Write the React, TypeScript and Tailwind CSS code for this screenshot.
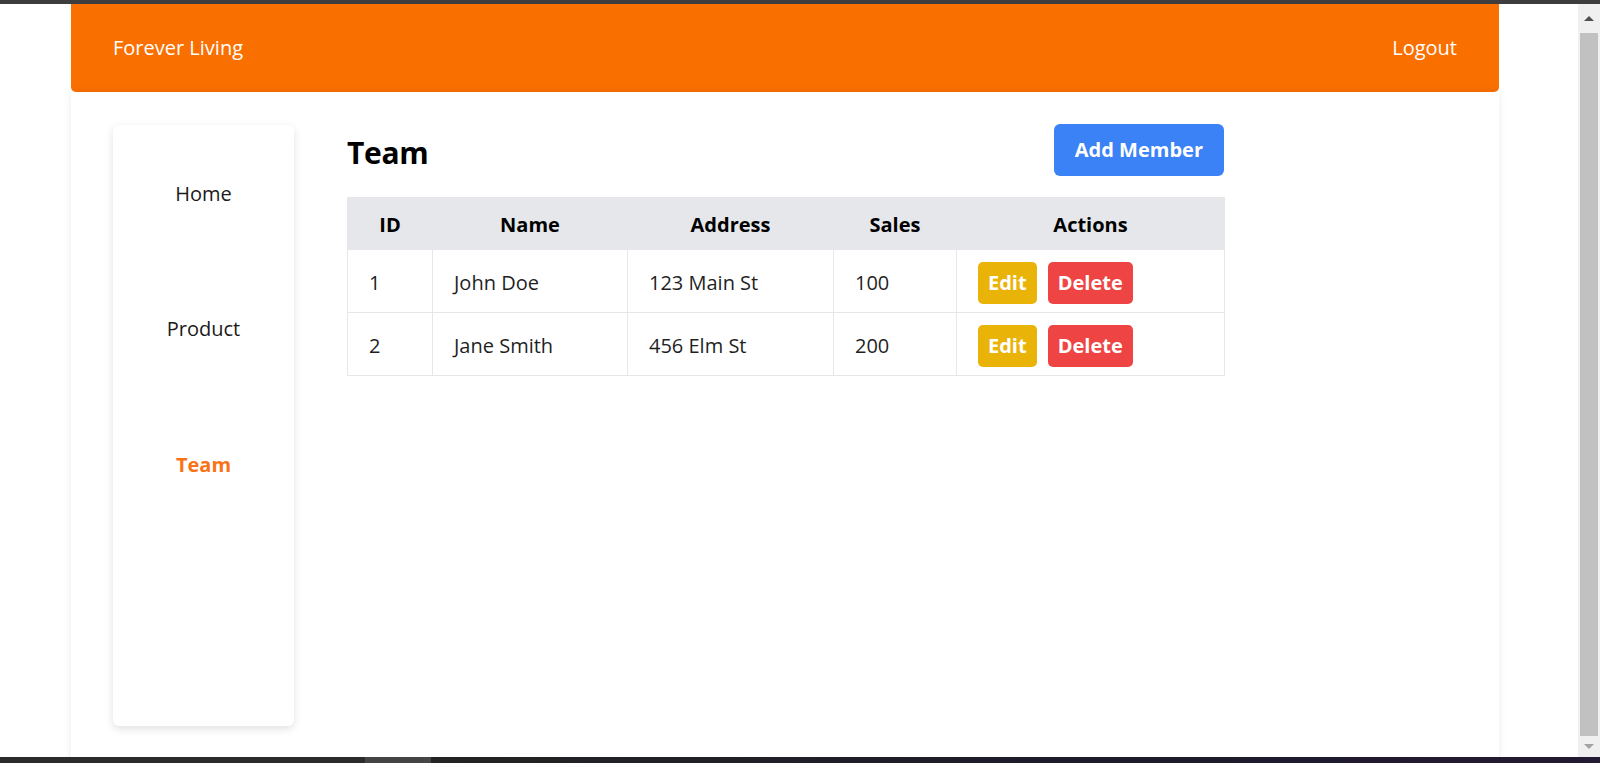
import React from 'react'

interface Member {
  id: number
  name: string
  address: string
  sales: number
}

const members: Member[] = [
  { id: 1, name: 'John Doe', address: '123 Main St', sales: 100 },
  { id: 2, name: 'Jane Smith', address: '456 Elm St', sales: 200 },
]

const navItems = [
  { label: 'Home', active: false },
  { label: 'Product', active: false },
  { label: 'Team', active: true },
]

const Scrollbar: React.FC = () => (
  <div className="flex w-[22px] flex-col bg-[#f0f0f0]">
    <div className="flex h-[29px] items-center justify-center">
      <div className="h-0 w-0 border-x-[5px] border-b-[5px] border-x-transparent border-b-[#505050]" />
    </div>
    <div className="mx-[2px] flex-1 bg-[#c1c1c1]" />
    <div className="flex h-[21px] items-center justify-center">
      <div className="h-0 w-0 border-x-[5px] border-t-[5px] border-x-transparent border-t-[#a3a3a3]" />
    </div>
  </div>
)

export default function App() {
  return (
    <div className="flex h-[763px] w-[1600px] flex-col overflow-hidden bg-white font-['Open_Sans',sans-serif]">
      {/* browser chrome edge */}
      <div className="h-[4px] bg-[#3d3d3d]" />

      <div className="flex h-[753px]">
        <div className="flex-1 overflow-hidden bg-white">
          {/* Navbar */}
          <header className="ml-[71px] flex h-[88px] w-[1428px] items-center justify-between rounded-b-[5px] bg-[#f96f00] px-[42px] text-[20px] text-white">
            <span>Forever Living</span>
            <button>Logout</button>
          </header>

          {/* Page card */}
          <main className="ml-[71px] flex w-[1428px] gap-[53px] bg-white pb-[40px] pl-[42px] pt-[32px] shadow-[0_0_8px_rgba(0,0,0,0.08)]">
            {/* Sidebar */}
            <aside className="mt-[1px] flex h-[601px] w-[181px] shrink-0 flex-col items-center gap-[105px] rounded-md bg-white pt-[54px] text-[20px] leading-[30px] shadow-[0_3px_8px_rgba(0,0,0,0.12)]">
              {navItems.map((item) => (
                <a
                  key={item.label}
                  className={item.active ? 'mt-[1px] font-bold text-[#f97316]' : 'text-[#1a1a1a]'}
                >
                  {item.label}
                </a>
              ))}
            </aside>

            {/* Content */}
            <section className="w-[877px]">
              <div className="flex items-center justify-between">
                <h1 className="pt-[4px] text-[30px] font-bold tracking-[-0.01em] text-black">Team</h1>
                <button className="h-[52px] rounded-md bg-[#3b82f6] px-[21px] text-[20px] font-bold text-white">
                  Add Member
                </button>
              </div>

              <table className="mt-[21px] w-full table-fixed border-collapse text-[20px] leading-[30px]">
                <colgroup>
                  <col className="w-[85px]" />
                  <col className="w-[195px]" />
                  <col className="w-[206px]" />
                  <col className="w-[123px]" />
                  <col className="w-[268px]" />
                </colgroup>
                <thead>
                  <tr className="h-[52px] bg-[#e5e7eb]">
                    <th className="border border-[#e5e7eb] pt-[2px] font-bold text-black">ID</th>
                    <th className="border border-[#e5e7eb] pt-[2px] font-bold text-black">Name</th>
                    <th className="border border-[#e5e7eb] pt-[2px] font-bold text-black">Address</th>
                    <th className="border border-[#e5e7eb] pt-[2px] font-bold text-black">Sales</th>
                    <th className="border border-[#e5e7eb] pt-[2px] font-bold text-black">Actions</th>
                  </tr>
                </thead>
                <tbody>
                  {members.map((m) => (
                    <tr key={m.id} className="h-[63px] text-[#1f1f1f]">
                      <td className="border border-[#e5e7eb] px-[21px] pt-[4px]">{m.id}</td>
                      <td className="border border-[#e5e7eb] px-[21px] pt-[4px]">{m.name}</td>
                      <td className="border border-[#e5e7eb] px-[21px] pt-[4px]">{m.address}</td>
                      <td className="border border-[#e5e7eb] px-[21px] pt-[4px]">{m.sales}</td>
                      <td className="border border-[#e5e7eb] px-[21px] pt-[4px]">
                        <div className="flex gap-[11px]">
                          <button className="h-[42px] rounded-[5px] bg-[#eab308] px-[10px] font-bold text-white">
                            Edit
                          </button>
                          <button className="h-[42px] rounded-[5px] bg-[#ef4444] px-[10px] font-bold text-white">
                            Delete
                          </button>
                        </div>
                      </td>
                    </tr>
                  ))}
                </tbody>
              </table>
            </section>
          </main>
        </div>

        <Scrollbar />
      </div>

      {/* taskbar edge */}
      <div className="flex h-[6px] bg-[#2b2b2b]">
        <div className="w-[365px]" />
        <div className="w-[66px] bg-[#454545]" />
        <div className="flex-1 bg-[linear-gradient(90deg,#232323,#1d1a2a_60%,#241a33)]" />
      </div>
    </div>
  )
}
